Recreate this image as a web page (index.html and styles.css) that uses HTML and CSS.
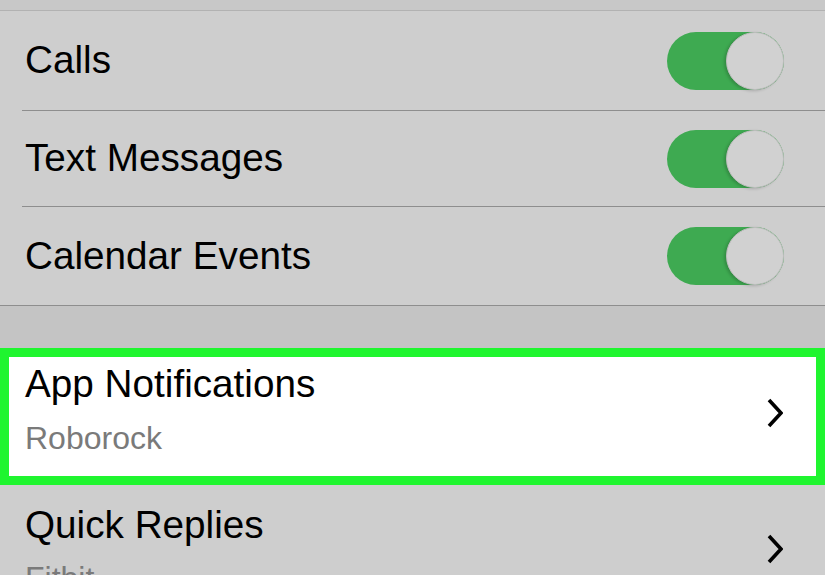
FILE: index.html
```html
<!DOCTYPE html>
<html>
<head>
<meta charset="utf-8">
<link rel="stylesheet" href="styles.css">
</head>
<body>
<div class="screen">
  <div class="topstrip"></div>
  <div class="group">
    <div class="row first">
      <span class="label">Calls</span>
      <span class="toggle"><span class="knob"></span></span>
    </div>
    <div class="row mid">
      <span class="label">Text Messages</span>
      <span class="toggle"><span class="knob"></span></span>
    </div>
    <div class="row last">
      <span class="label">Calendar Events</span>
      <span class="toggle"><span class="knob"></span></span>
    </div>
  </div>
  <div class="gap"></div>
  <div class="nav highlight">
    <div class="texts">
      <div class="title">App Notifications</div>
      <div class="sub">Roborock</div>
    </div>
    <svg class="chev" width="16" height="30" viewBox="0 0 16 30"><polyline points="2,2 14,15 2,28" fill="none" stroke="#000" stroke-width="3.6" stroke-linejoin="miter"/></svg>
  </div>
  <div class="nav plain">
    <div class="texts">
      <div class="title">Quick Replies</div>
      <div class="sub">Fitbit</div>
    </div>
    <svg class="chev" width="16" height="30" viewBox="0 0 16 30"><polyline points="2,2 14,15 2,28" fill="none" stroke="#000" stroke-width="3.6" stroke-linejoin="miter"/></svg>
  </div>
</div>
</body>
</html>
```
FILE: styles.css
```css
html, body {
  margin: 0;
  padding: 0;
}
body {
  width: 825px;
  height: 575px;
  overflow: hidden;
  background: #cecece;
  font-family: "Liberation Sans", Arial, sans-serif;
}
.screen {
  display: flex;
  flex-direction: column;
}
.topstrip {
  height: 10px;
  background: #c8c8c8;
  border-bottom: 1px solid #b2b2b2;
}
.group {
  background: #cecece;
  padding-left: 22px;
}
.row {
  height: 98px;
  display: flex;
  align-items: center;
  justify-content: space-between;
  padding-left: 3px;
  padding-right: 41px;
  border-bottom: 1px solid #8e8e8e;
}
.row.first {
  height: 99px;
}
.row.mid {
  height: 95px;
}
.row.last {
  height: 98px;
  margin-left: -22px;
  padding-left: 25px;
}
.label {
  font-size: 38.7px;
  line-height: 1;
  color: #000;
}
.toggle {
  position: relative;
  width: 117px;
  height: 58px;
  border-radius: 29px;
  background: #3eaa51;
  display: block;
}
.knob {
  position: absolute;
  right: 0;
  top: 0;
  width: 56px;
  height: 56px;
  border-radius: 50%;
  background: #d1d1d1;
  border: 1px solid #bdbdbd;
  box-shadow: -2px 1px 3px rgba(0,0,0,0.18);
}
.gap {
  height: 42px;
  background: #c4c4c4;
}
.nav {
  display: flex;
  align-items: center;
  justify-content: space-between;
}
.highlight {
  border: 9px solid #1ff52f;
  background: #ffffff;
  padding: 5px 24px 18px 16px;
  height: 96px;
}
.plain {
  padding: 18px 42px 0 25px;
  background: #cecece;
}
.title {
  font-size: 38.7px;
  line-height: 44px;
  color: #000;
}
.sub {
  font-size: 32px;
  line-height: 40px;
  color: #7a7a7a;
  margin-top: 12px;
}
.plain .sub {
  margin-top: 11px;
}
.highlight .chev {
  margin-right: 9px;
  margin-top: 6px;
}
.plain .chev {
  margin-top: -4px;
}
```
